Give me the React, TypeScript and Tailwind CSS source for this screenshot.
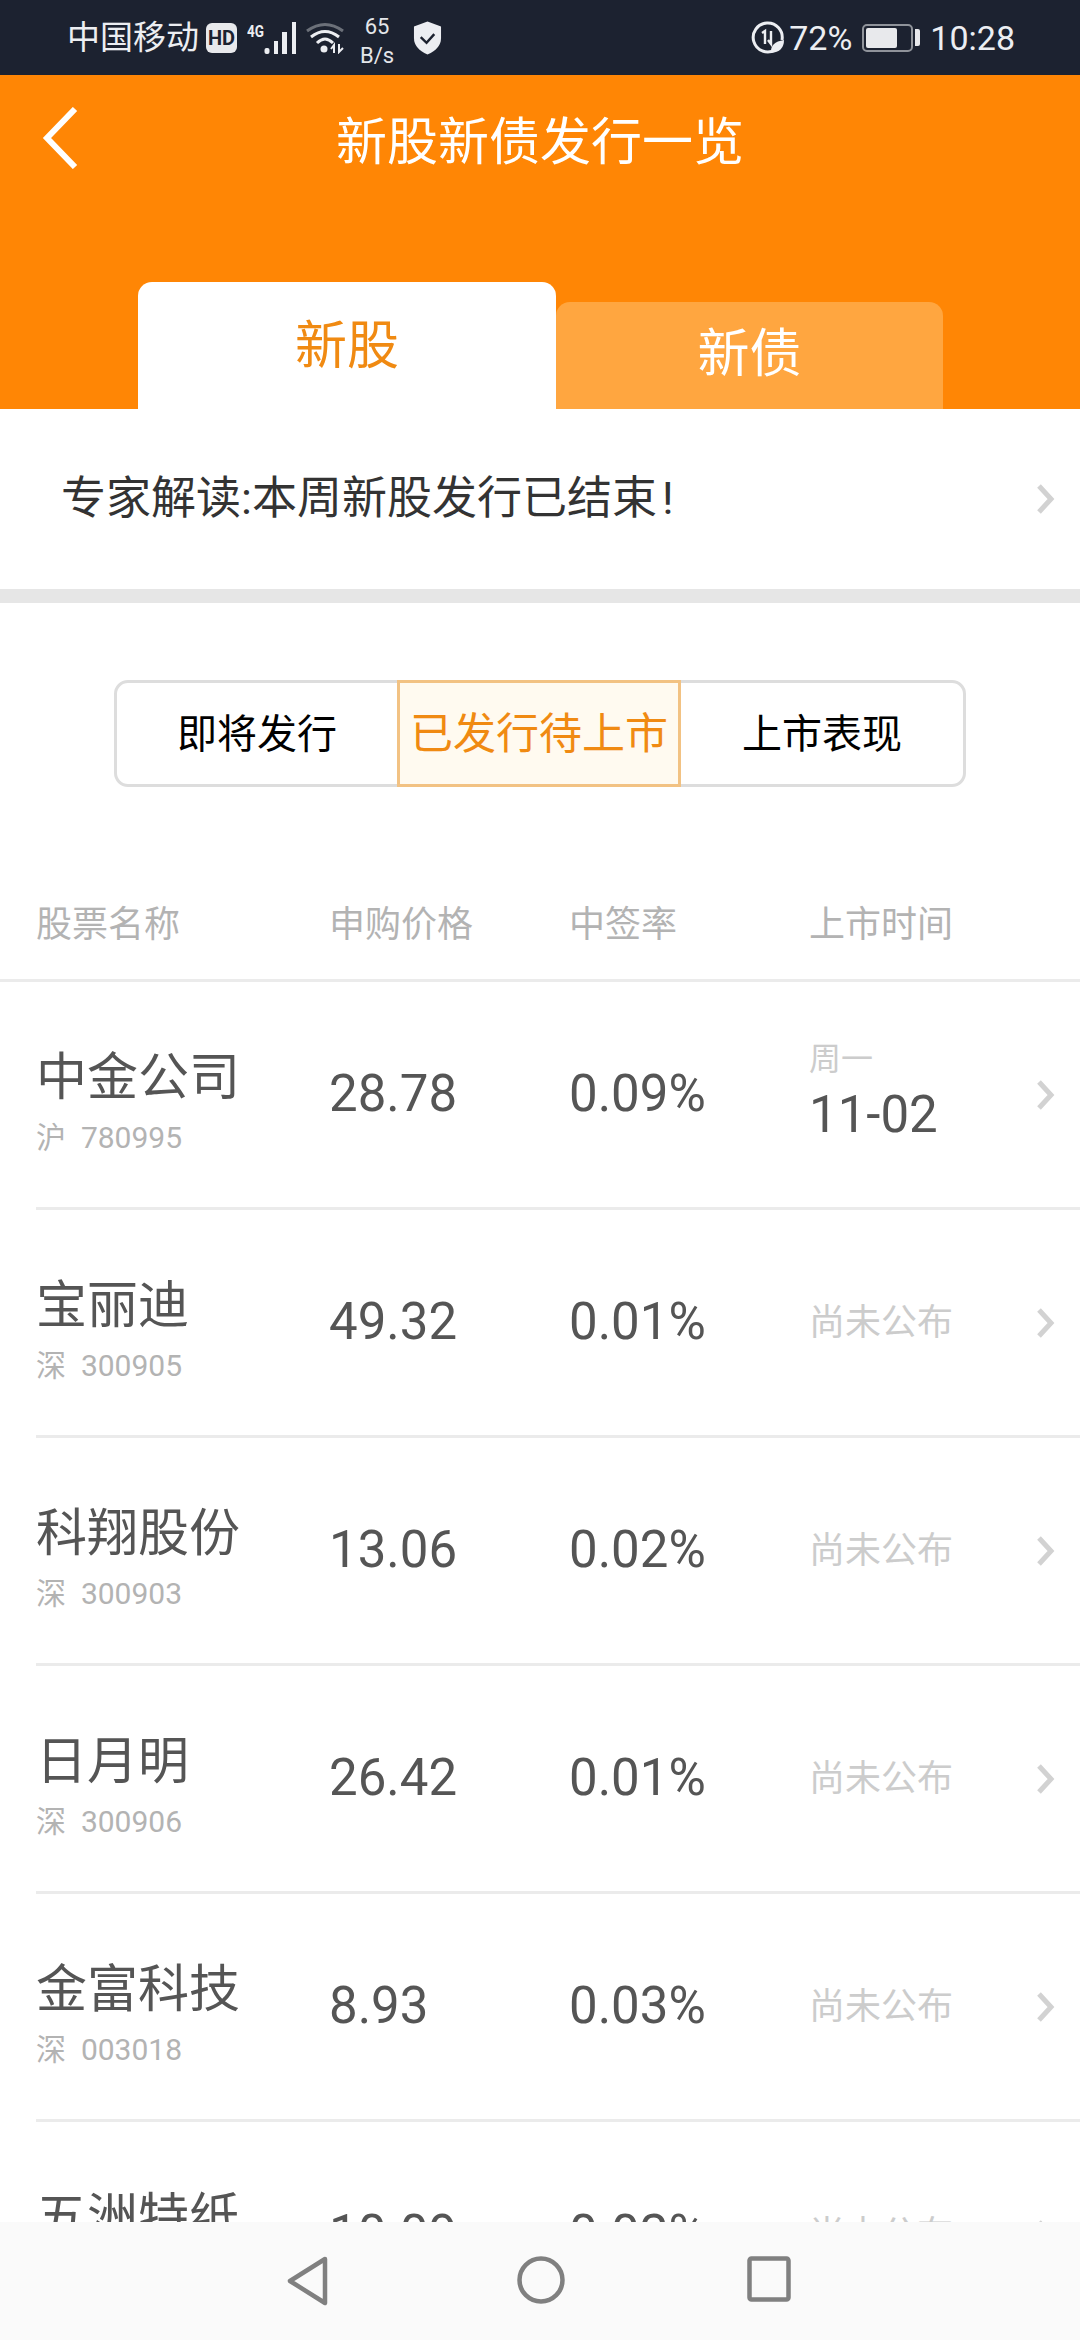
const rows = [
  { name: '中金公司', market: '沪', code: '780995', price: '28.78', rate: '0.09%', week: '周一', date: '11-02' },
  { name: '宝丽迪', market: '深', code: '300905', price: '49.32', rate: '0.01%' },
  { name: '科翔股份', market: '深', code: '300903', price: '13.06', rate: '0.02%' },
  { name: '日月明', market: '深', code: '300906', price: '26.42', rate: '0.01%' },
  { name: '金富科技', market: '深', code: '003018', price: '8.93', rate: '0.03%' },
  { name: '五洲特纸', market: '沪', code: '605007', price: '10.09', rate: '0.02%' },
];

const Chevron = () => (
  <svg width="22" height="32" viewBox="0 0 22 32" fill="none" className="shrink-0">
    <path d="M5 3 L17 16 L5 29" stroke="#d2d2d2" strokeWidth="5" />
  </svg>
);

const StatusLeft = () => (
  <div className="flex items-center">
    <span className="text-[33px] leading-none text-[#eceef2]">中国移动</span>
    <span className="ml-[7px] flex h-[30px] w-[31px] items-center justify-center rounded-[6px] bg-[#e8e9ec] text-[20px] font-bold leading-none text-[#1c2230]">HD</span>
    <svg width="49" height="32" viewBox="0 0 49 32" className="ml-[10px]" fill="#eceef2">
      <text x="0" y="15" fontSize="16" fontWeight="700" fontFamily="Roboto" textLength="17" lengthAdjust="spacingAndGlyphs">4G</text>
      <rect x="17.5" y="26" width="5" height="6" rx="2" />
      <rect x="27" y="19" width="4" height="13" />
      <rect x="35" y="10" width="5" height="22" />
      <rect x="45" y="0" width="4" height="32" />
    </svg>
    <svg width="38" height="32" viewBox="0 0 38 32" className="ml-[10px]" fill="none">
      <path d="M1 9 Q19 -4 37 9" stroke="#6b7079" strokeWidth="3" />
      <path d="M5 15 Q19 4 33 15" stroke="#eceef2" strokeWidth="3" />
      <path d="M11 21 Q19 13 27 21" stroke="#eceef2" strokeWidth="3" />
      <circle cx="18" cy="27" r="3.5" fill="#eceef2" />
      <path d="M28 31 V23 L25 27 M33 22 V30 L37 26" stroke="#eceef2" strokeWidth="2" />
    </svg>
    <div className="ml-[16px] flex w-[34px] flex-col items-center pt-[6px] text-[22px] leading-[29px] text-[#e4e6ea]">
      <span>65</span>
      <span>B/s</span>
    </div>
    <svg width="29" height="36" viewBox="0 0 30 36" className="ml-[19px]">
      <path d="M15 1 L29 6 V18 Q29 29 15 35 Q1 29 1 18 V6 Z" fill="#eceef2" />
      <path d="M8 17 L14 23 L22 14" stroke="#1c2230" strokeWidth="2.5" fill="none" />
    </svg>
  </div>
);

const StatusRight = () => (
  <div className="flex items-center">
    <svg width="34" height="34" viewBox="0 0 34 34" fill="none">
      <path d="M24 29 A14.5 14.5 0 1 1 31 19" stroke="#eceef2" strokeWidth="3" />
      <path d="M11 12 L14 10 V23 M20 10 V23 L17 19" stroke="#eceef2" strokeWidth="2.4" />
      <path d="M20 32 Q19 21 33 19 Q33 31 20 32 Z" fill="#eceef2" />
    </svg>
    <span className="ml-[4px] text-[34px] leading-none text-[#eceef2]">72%</span>
    <div className="ml-[10px] flex h-[28px] w-[51px] items-center rounded-[5px] border-2 border-[#8f939a] p-[2px]">
      <div className="h-full w-[72%] rounded-[2px] bg-[#e8e9ec]" />
    </div>
    <div className="ml-[2px] h-[17px] w-[5px] rounded-r-[2px] bg-[#e8e9ec]" />
    <span className="ml-[10px] text-[34px] leading-none text-[#eceef2]">10:28</span>
  </div>
);

export default function App() {
  return (
    <div className="flex h-[2340px] w-[1080px] flex-col overflow-hidden bg-white font-['Roboto','Noto_Sans_CJK_SC',sans-serif]">
      <div className="flex h-[75px] shrink-0 items-center justify-between bg-[#1c2230] pl-[67px] pr-[65px]">
        <StatusLeft />
        <StatusRight />
      </div>

      <div className="relative h-[334px] shrink-0 bg-[#ff8605]">
        <svg width="36" height="62" viewBox="0 0 36 62" fill="none" className="absolute left-[42px] top-[32px]">
          <path d="M33 2 L5 31 L33 60" stroke="white" strokeWidth="6" />
        </svg>
        <div className="pt-[35px] text-center text-[51px] leading-[66px] text-white">新股新债发行一览</div>
        <div className="absolute bottom-0 left-[138px] flex items-end">
          <div className="flex h-[127px] w-[418px] justify-center rounded-t-[14px] bg-white pt-[32px] text-[52px] leading-[66px] text-[#f08a12]">新股</div>
          <div className="flex h-[107px] w-[387px] justify-center rounded-t-[14px] bg-[#ffa640] pt-[20px] text-[52px] leading-[66px] text-white">新债</div>
        </div>
      </div>

      <div className="flex h-[180px] shrink-0 items-center justify-between pl-[61px] pr-[24px]">
        <span className="text-[45px] text-[#333333]">专家解读:本周新股发行已结束<span className="ml-[5px]">!</span></span>
        <Chevron />
      </div>
      <div className="h-[14px] shrink-0 bg-[#e6e6e6]" />

      <div className="flex shrink-0 justify-center pt-[77px]">
        <div className="flex h-[107px] w-[852px] rounded-[14px] border-[3px] border-[#dddddd] text-[40px]">
          <div className="flex w-[280px] items-center justify-center pt-[2px] text-black">即将发行</div>
          <div className="-my-[3px] flex w-[284px] items-center justify-center border-[3px] border-[#f2c283] bg-[#fffaf0] pt-[2px] text-[43px] text-[#f08a12]">已发行待上市</div>
          <div className="flex flex-1 items-center justify-center pt-[2px] text-black">上市表现</div>
        </div>
      </div>

      <div className="mt-[76px] flex h-[119px] shrink-0 items-center border-b-[3px] border-[#ebebeb] pl-[36px] pt-[8px] text-[36px] text-[#b3b3b3]">
        <span className="w-[293px]">股票名称</span>
        <span className="w-[240px]">申购价格</span>
        <span className="w-[240px]">中签率</span>
        <span>上市时间</span>
      </div>

      <div className="min-h-0 flex-1 overflow-hidden">
        {rows.map((r) => (
          <div key={r.code} className="ml-[36px] flex h-[228px] items-center border-b-[3px] border-[#ebebeb] pr-[24px]">
            <div className="w-[293px] pt-[13px]">
              <div className="text-[51px] leading-[64px] text-[#555555]">{r.name}</div>
              <div className="mt-[10px] text-[30px] leading-[36px] text-[#b3b3b3]">{r.market}&nbsp; {r.code}</div>
            </div>
            <div className="w-[240px] text-[51px] text-[#555555]">{r.price}</div>
            <div className="w-[240px] text-[51px] text-[#555555]">{r.rate}</div>
            <div className="flex-1">
              {r.date ? (
                <div className="pb-[8px]">
                  <div className="text-[32px] leading-[44px] text-[#cccccc]">{r.week}</div>
                  <div className="mt-[4px] text-[51px] leading-[60px] text-[#555555]">{r.date}</div>
                </div>
              ) : (
                <div className="text-[36px] text-[#cccccc]">尚未公布</div>
              )}
            </div>
            <Chevron />
          </div>
        ))}
      </div>

      <div className="flex h-[118px] shrink-0 items-start justify-center bg-[#fafafa] pr-[3px] pt-[34px]">
        <svg width="44" height="50" viewBox="0 0 44 50" fill="none" className="mr-[187px]">
          <path d="M39 3 L4 25 L39 47 Z" stroke="#808080" strokeWidth="4.5" strokeLinejoin="round" />
        </svg>
        <svg width="48" height="48" viewBox="0 0 48 48" fill="none" className="mr-[182px]">
          <circle cx="24" cy="24" r="21.5" stroke="#808080" strokeWidth="4.5" />
        </svg>
        <svg width="44" height="46" viewBox="0 0 44 46" fill="none">
          <rect x="2.5" y="2.5" width="39" height="41" rx="2" stroke="#808080" strokeWidth="4.5" />
        </svg>
      </div>
    </div>
  );
}
